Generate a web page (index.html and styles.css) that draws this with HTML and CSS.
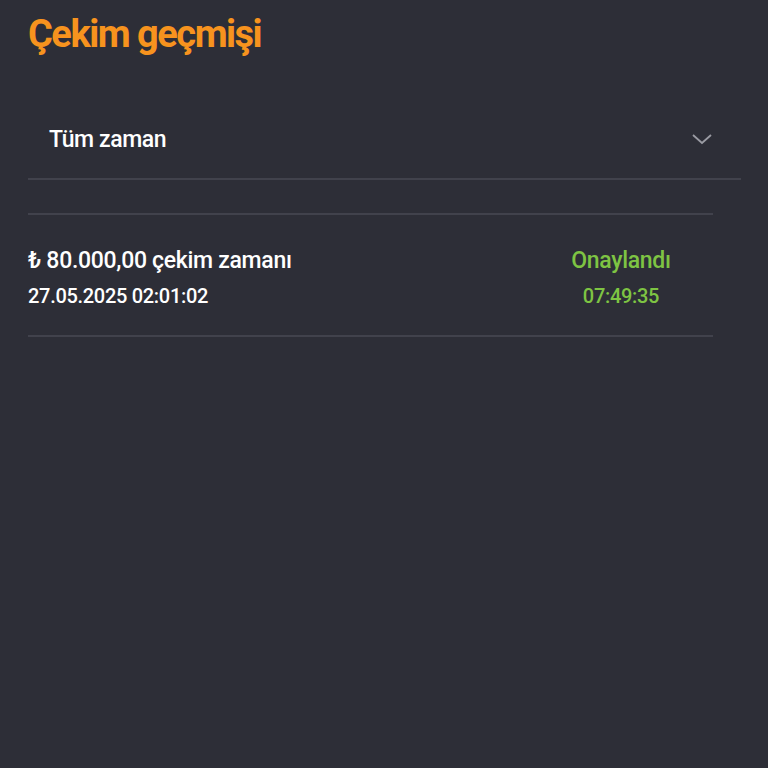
FILE: index.html
```html
<!DOCTYPE html>
<html lang="tr">
<head>
<meta charset="UTF-8">
<title>Çekim geçmişi</title>
<link rel="stylesheet" href="styles.css">
</head>
<body>
<div class="page">
    <h1 class="title">Çekim geçmişi</h1>

    <div class="filter">
        <span class="filter-label">Tüm zaman</span>
        <svg class="chevron" width="22" height="14" viewBox="0 0 22 14">
            <path d="M2 3 L11 11 L20 3" fill="none" stroke="#9a9ba3" stroke-width="1.8"/>
        </svg>
    </div>

    <div class="list">
        <div class="row">
            <div class="row-left">
                <div class="amount">₺ 80.000,00 çekim zamanı</div>
                <div class="date">27.05.2025 02:01:02</div>
            </div>
            <div class="row-right">
                <div class="status">Onaylandı</div>
                <div class="time">07:49:35</div>
            </div>
        </div>
    </div>
</div>
</body>
</html>
```

FILE: styles.css
```css
* {
    padding: 0;
    margin: 0;
    box-sizing: border-box;
}

html, body {
    height: 100%;
}

body {
    background-color: #2d2e37;
    font-family: Roboto, "Liberation Sans", sans-serif;
    color: #ffffff;
}

.page {
    padding: 11px 27px 0 28px;
}

.title {
    font-size: 38px;
    font-weight: 700;
    color: #f7931e;
    line-height: 46px;
    letter-spacing: -1.5px;
}

.filter {
    margin-top: 49px;
    height: 74px;
    padding: 0 28px 6px 21px;
    display: flex;
    align-items: center;
    justify-content: space-between;
    border-bottom: 2px solid #41424c;
}

.filter-label {
    font-size: 23px;
    font-weight: 500;
    letter-spacing: -0.4px;
}

.chevron {
    display: block;
}

.list {
    margin-top: 33px;
    margin-right: 28px;
    border-top: 2px solid #41424c;
}

.row {
    display: flex;
    justify-content: space-between;
    padding: 31px 0 24px 0;
    border-bottom: 2px solid #41424c;
}

.row-left .amount {
    font-size: 23px;
    font-weight: 500;
    line-height: 30px;
    letter-spacing: -0.3px;
}

.row-left .date {
    font-size: 20px;
    font-weight: 500;
    line-height: 30px;
    margin-top: 5px;
    letter-spacing: -0.3px;
}

.row-right {
    width: 100px;
    margin-right: 42px;
    text-align: center;
    color: #7ec443;
}

.row-right .status {
    font-size: 23px;
    font-weight: 500;
    line-height: 30px;
    letter-spacing: -0.3px;
}

.row-right .time {
    font-size: 20px;
    font-weight: 500;
    line-height: 30px;
    margin-top: 5px;
    letter-spacing: -0.3px;
}
```
